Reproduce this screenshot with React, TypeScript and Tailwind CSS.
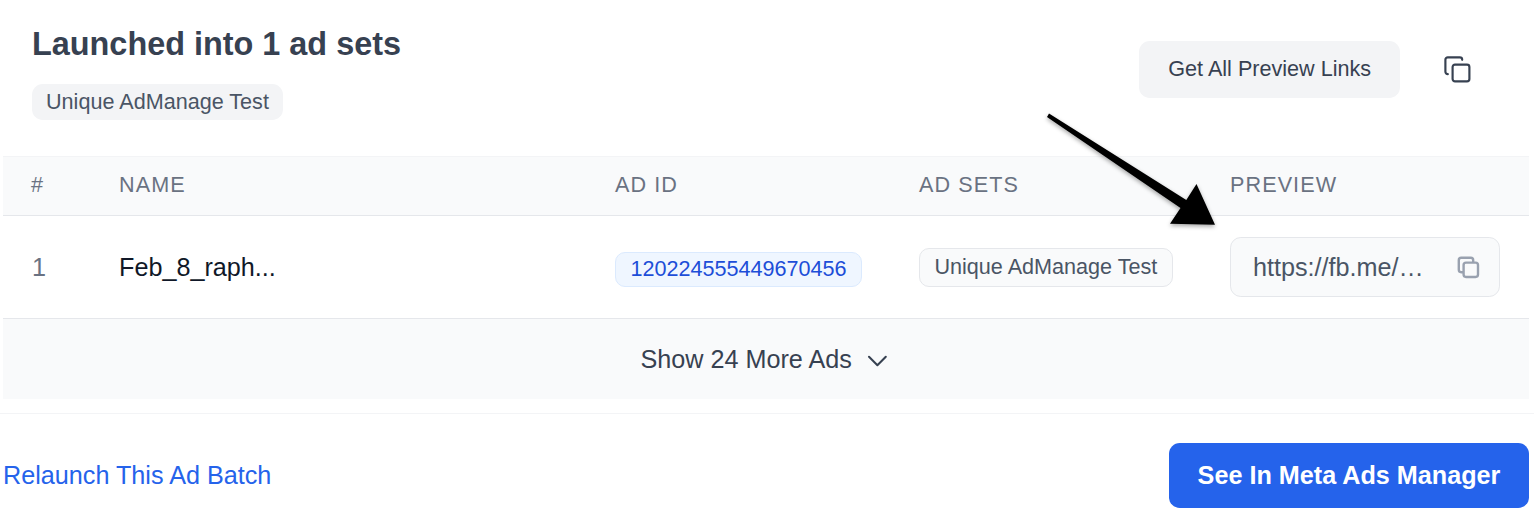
import { Copy } from 'lucide-react'

const ads = [
  {
    name: 'Feb_8_raph...',
    adId: '120224555449670456',
    adSet: 'Unique AdManage Test',
    preview: 'https://fb.me/…',
  },
]

const columns =
  'grid grid-cols-[87px_496px_304px_311px_1fr] pl-[29px] pr-[29px]'

function DuplicateIcon() {
  return (
    <svg
      className="size-[28.8px] text-gray-400"
      viewBox="0 0 24 24"
      fill="none"
      stroke="currentColor"
      strokeWidth={2}
      strokeLinecap="round"
      strokeLinejoin="round"
    >
      <path d="M8 16H6a2 2 0 0 1-2-2V6a2 2 0 0 1 2-2h8a2 2 0 0 1 2 2v2m-6 12h8a2 2 0 0 0 2-2v-8a2 2 0 0 0-2-2h-8a2 2 0 0 0-2 2v8a2 2 0 0 0 2 2z" />
    </svg>
  )
}

function ChevronIcon() {
  return (
    <svg
      className="size-[28.8px]"
      viewBox="0 0 24 24"
      fill="none"
      stroke="currentColor"
      strokeWidth={1.7}
      strokeLinecap="round"
      strokeLinejoin="round"
    >
      <path d="M19 9l-7 7-7-7" />
    </svg>
  )
}

function Arrow() {
  return (
    <svg
      className="pointer-events-none absolute left-[1040px] top-[105px] drop-shadow-[0_2px_2px_rgba(0,0,0,0.35)]"
      width="185"
      height="135"
      viewBox="1040 105 185 135"
    >
      <path d="M1049 113.5 L1186.3 200 L1196.5 184 L1215 224.8 L1170 223.8 L1180.5 208 L1047 117 Z" />
    </svg>
  )
}

function Header() {
  return (
    <header className="flex h-[156px] items-start justify-between pl-8 pr-[62px]">
      <div className="pt-[26px]">
        <h2 className="text-[32.4px] font-bold leading-9 text-[#374151]">
          Launched into 1 ad sets
        </h2>
        <span className="mt-[22px] flex h-9 w-fit items-center rounded-[10.8px] bg-gray-100 px-[14px] text-[21.6px] text-gray-600">
          Unique AdManage Test
        </span>
      </div>

      <div className="flex items-center gap-[43px] pt-[41px]">
        <button className="h-[57px] w-[261px] rounded-[10.8px] bg-gray-100 text-[21.6px] text-[#374151]">
          Get All Preview Links
        </button>
        <Copy className="size-[28.8px] text-[#374151]" strokeWidth={1.8} />
      </div>
    </header>
  )
}

function AdsTable() {
  return (
    <section className="ml-[3px] mr-[5px]">
      <div
        className={`${columns} h-[60px] items-center border-b border-t border-b-gray-200 border-t-gray-100 bg-gray-50 pb-0.5 text-[21.6px] tracking-[0.05em] text-gray-500`}
      >
        <span className="-ml-px">#</span>
        <span>NAME</span>
        <span>AD ID</span>
        <span>AD SETS</span>
        <span>PREVIEW</span>
      </div>

      {ads.map((ad, index) => (
        <div
          key={ad.adId}
          className={`${columns} h-[103px] items-center border-b border-gray-200 text-[25.2px]`}
        >
          <span className="pt-0.5 text-gray-500">{index + 1}</span>
          <span className="pt-0.5 text-gray-900">{ad.name}</span>
          <span className="mt-1 flex h-[35px] w-fit items-center rounded-[10px] border border-blue-100 bg-[#eff6ff] px-[14.4px] text-[21.6px] text-[#1d4ed8]">
            {ad.adId}
          </span>
          <span className="flex h-[39px] w-fit items-center rounded-[10px] border border-gray-200 bg-gray-50 px-[14.4px] text-[21.6px] text-gray-600">
            {ad.adSet}
          </span>
          <div className="flex h-[60px] w-[270px] items-center justify-between rounded-[10.8px] border border-gray-200 bg-gray-50 pl-[22px] pr-4 text-gray-600">
            <span className="pt-0.5">{ad.preview}</span>
            <DuplicateIcon />
          </div>
        </div>
      ))}

      <button className="flex h-20 w-full items-center justify-center gap-[11px] bg-gray-50 pt-0.5 text-[25.2px] text-[#374151]">
        Show 24 More Ads
        <ChevronIcon />
      </button>
    </section>
  )
}

export default function App() {
  return (
    <main className="relative h-[520px] overflow-hidden bg-white font-['Liberation_Sans',Arial,sans-serif]">
      <Header />
      <AdsTable />

      <footer className="mt-[14px] flex items-start justify-between border-t border-gray-100 pl-[3px] pr-[5px] pt-[29px]">
        <a className="text-[25.2px] leading-[65px] text-[#2563eb]">
          Relaunch This Ad Batch
        </a>
        <button className="h-[65px] w-[360px] rounded-[10.8px] bg-[#2563eb] text-[25.2px] font-bold text-white">
          See In Meta Ads Manager
        </button>
      </footer>

      <Arrow />
    </main>
  )
}
